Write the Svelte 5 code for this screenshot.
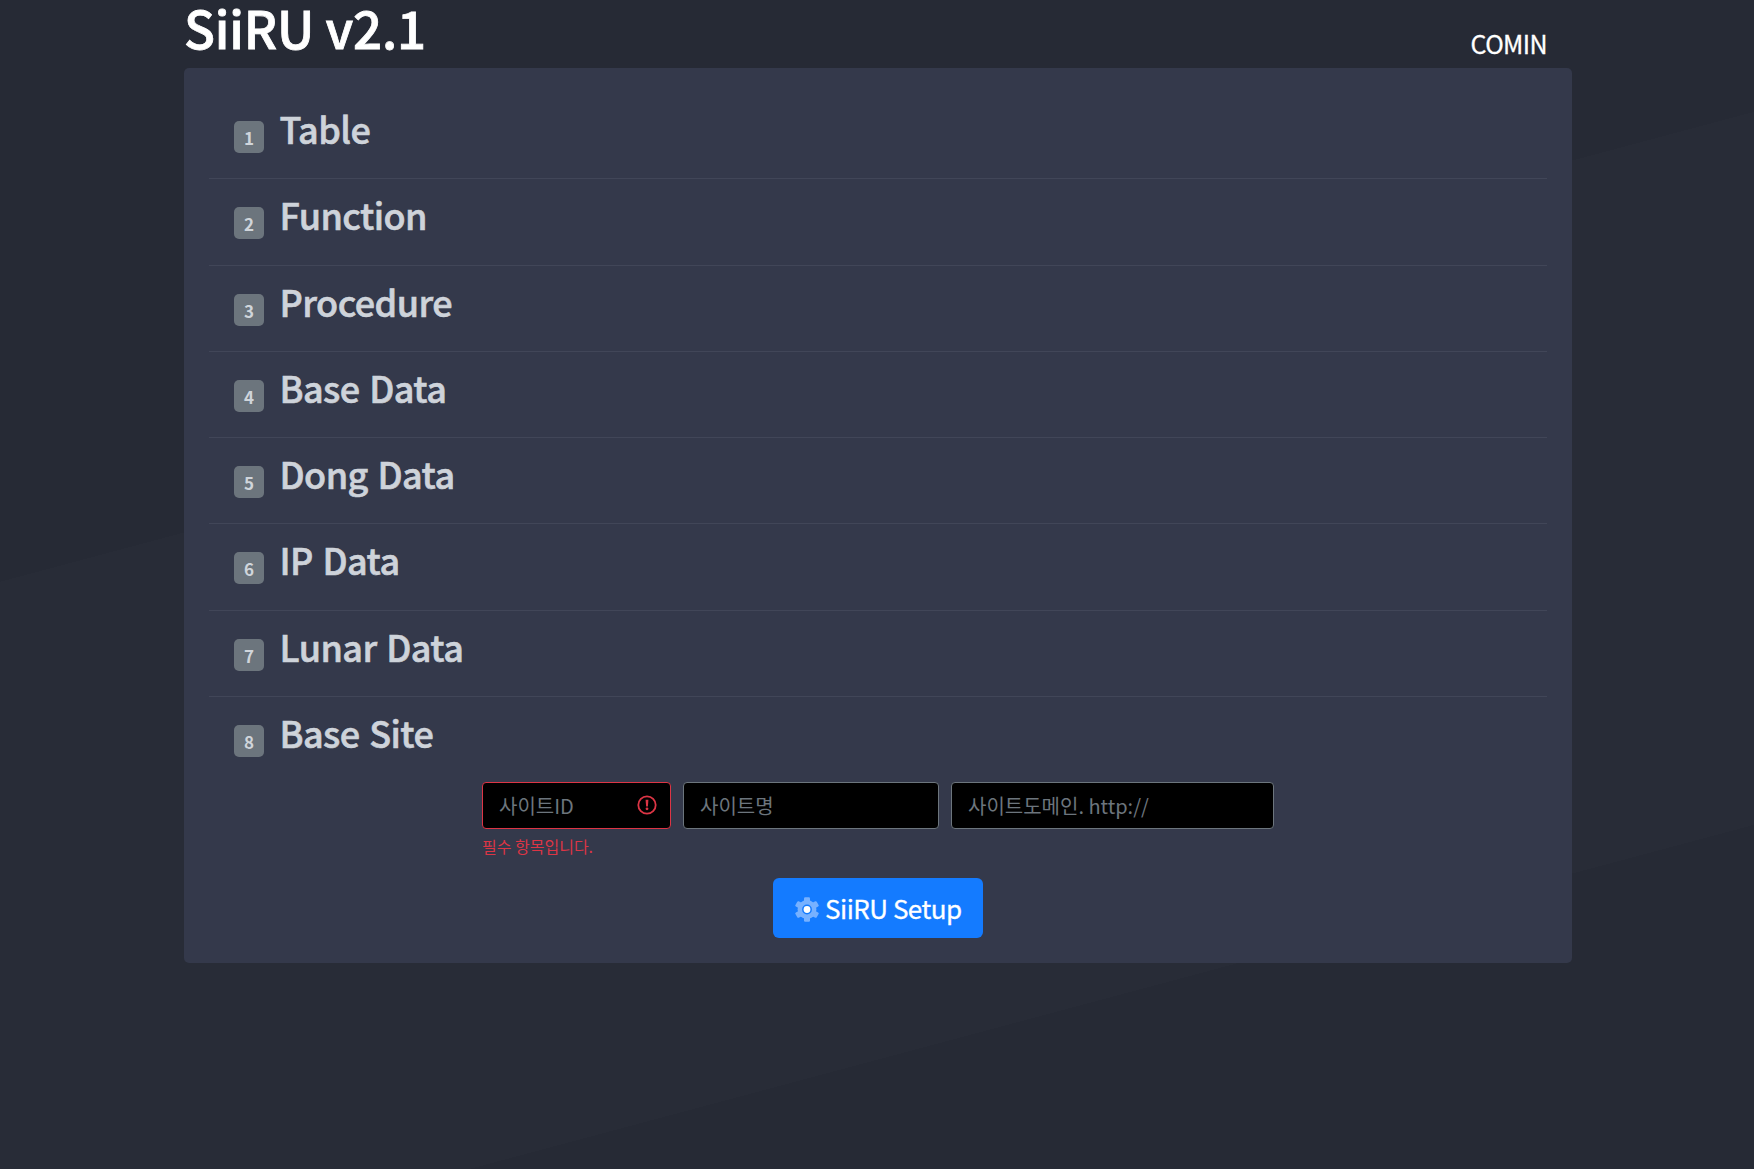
<script>
  const steps = ['Table', 'Function', 'Procedure', 'Base Data', 'Dong Data', 'IP Data', 'Lunar Data', 'Base Site'];
</script>

<div class="page">
  <header>
    <h1>SiiRU v2.1</h1>
    <span class="company">COMIN</span>
  </header>
  <main>
    <ol>
      {#each steps as step, i}
        <li><span class="badge">{i + 1}</span><h2>{step}</h2></li>
      {/each}
    </ol>
    <form>
      <div class="fields">
        <div class="field id">
          <div class="box invalid">
            <input placeholder="사이트ID" aria-label="사이트ID" />
            <svg class="alert" viewBox="0 0 20 20" aria-hidden="true">
              <circle cx="10" cy="10" r="8.7" fill="none" stroke="currentColor" stroke-width="1.8" />
              <path d="M8.6 4.8h2.8l-.5 6.6H9.1z" fill="currentColor" />
              <circle cx="10" cy="13.8" r="1.4" fill="currentColor" />
            </svg>
          </div>
          <p class="error">필수 항목입니다.</p>
        </div>
        <div class="field name"><div class="box"><input placeholder="사이트명" aria-label="사이트명" /></div></div>
        <div class="field domain"><div class="box"><input placeholder="사이트도메인. http://" aria-label="사이트도메인" /></div></div>
      </div>
      <button type="button">
        <svg class="gear" viewBox="0 0 24 25" aria-hidden="true">
          <g fill="#77b1ff">
            <circle cx="12" cy="12.5" r="9.4" />
            {#each [0, 60, 120, 180, 240, 300] as angle}
              <rect x="9" y="0.2" width="6" height="7" rx="1.2" transform="rotate({angle} 12 12.5)" />
            {/each}
          </g>
          <circle cx="12" cy="12.5" r="4.9" fill="#147bff" />
          <circle cx="12" cy="12.5" r="3.4" fill="#fff" />
        </svg>
        <span class="label">SiiRU Setup</span>
      </button>
    </form>
  </main>
</div>

<style>
  :global(body) { margin: 0; background: #262a35; }
  .page, .page * { box-sizing: border-box; }
  .page {
    height: 1169px;
    padding: 0 182px 0 184px;
    font-family: "Noto Sans CJK KR", "Noto Sans", sans-serif;
    color: #fff;
    background: linear-gradient(165deg, #262a35 35.5%, #282c37 35.5%, #282c37 79%, #262a35 79%);
  }
  header { height: 68px; display: flex; justify-content: space-between; padding-right: 25px; }
  h1 {
    margin: 0;
    font-size: 51px;
    font-weight: 500;
    line-height: 54px;
    letter-spacing: -0.2px;
    white-space: nowrap;
    -webkit-text-stroke: 0.8px currentColor;
  }
  .company {
    font-size: 25px;
    line-height: 36px;
    padding-top: 25px;
    letter-spacing: -0.6px;
    -webkit-text-stroke: 0.3px currentColor;
  }
  main { height: 895px; padding: 25px; border-radius: 5px; background: #34394b; }
  ol { list-style: none; margin: 0; padding: 0; }
  li {
    display: flex;
    align-items: flex-start;
    height: 86.25px;
    padding: 28px 25px 0;
    border-bottom: 1px solid #414658;
  }
  li:last-child { height: 84.9px; border-bottom: 0; }
  .badge {
    width: 30px;
    height: 32px;
    margin-right: 16px;
    border-radius: 5px;
    background: #6c757d;
    color: #d0d5db;
    font-size: 17px;
    font-weight: 700;
    line-height: 33px;
    text-align: center;
  }
  h2 {
    margin: -18px 0 0 -0.5px;
    font-size: 36px;
    font-weight: 500;
    line-height: 50px;
    letter-spacing: -0.55px;
    word-spacing: 2px;
    color: #ced3da;
    -webkit-text-stroke: 0.6px currentColor;
  }
  form { display: flex; flex-direction: column; align-items: center; }
  .fields { display: flex; gap: 12px; height: 96px; }
  .id { width: 189px; }
  .name { width: 256px; }
  .domain { width: 323px; }
  .box {
    height: 47px;
    display: flex;
    align-items: center;
    padding: 0 13px 0 16px;
    border: 1px solid #6c757d;
    border-radius: 4px;
    background: #000;
  }
  .invalid { border-color: #dc3545; }
  input {
    flex: 1;
    min-width: 0;
    padding: 0;
    border: 0;
    outline: 0;
    background: transparent;
    color: #fff;
    font: 400 20px "Noto Sans CJK KR", sans-serif;
  }
  input::placeholder { color: #6c757d; opacity: 1; }
  .alert { width: 20px; height: 20px; color: #dc3545; }
  .error { margin: 4px 0 0; font-size: 16px; line-height: 26px; color: #dc3545; white-space: nowrap; }
  button {
    display: flex;
    align-items: center;
    width: 210px;
    height: 60px;
    padding: 3px 0 0 22px;
    border: 0;
    border-radius: 6px;
    background: #147bff;
    color: #fff;
    font: 400 26px "Noto Sans CJK KR", sans-serif;
    letter-spacing: -0.5px;
    white-space: nowrap;
  }
  .label { margin-top: -3px; -webkit-text-stroke: 0.3px currentColor; }
  .gear { width: 24px; height: 25px; margin-right: 6px; }
</style>
